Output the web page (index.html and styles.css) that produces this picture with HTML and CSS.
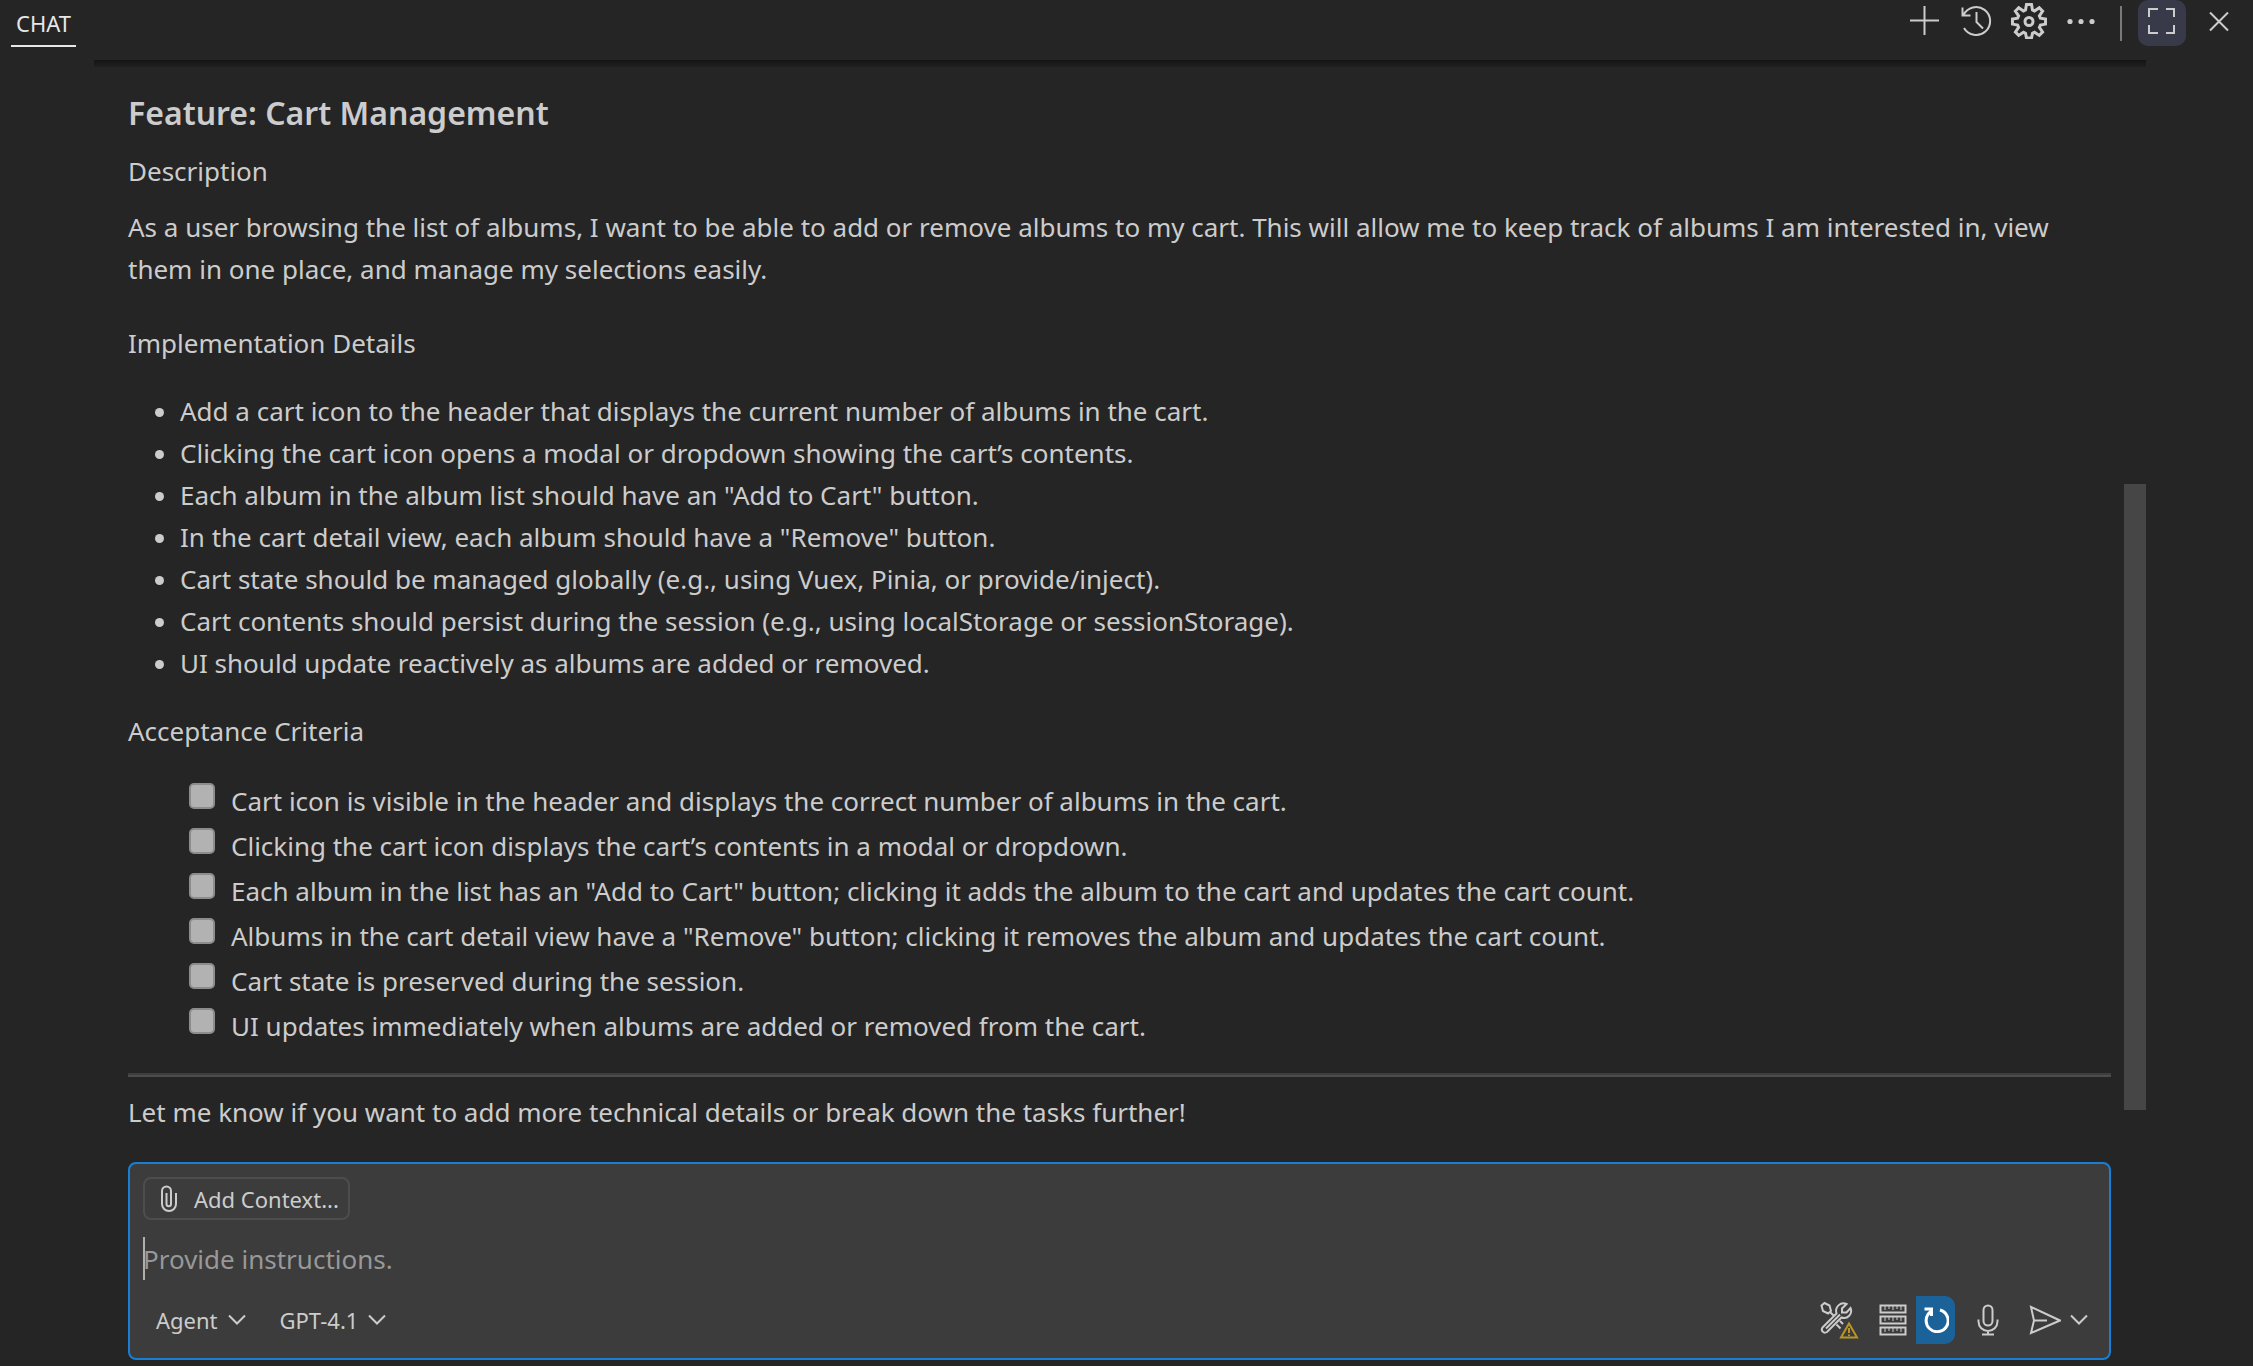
FILE: index.html
```html
<!DOCTYPE html>
<html lang="en">
<head>
<meta charset="utf-8">
<title>Chat</title>
<link rel="stylesheet" href="styles.css">
</head>
<body>
<header class="titlebar">
  <h1 class="tab">CHAT</h1>
  <div class="actions">
    <button class="icon-btn" aria-label="New chat"><svg width="36" height="36" viewBox="0 0 36 36"><path d="M17.500 3v29M3 17.500h29"/></svg></button>
    <button class="icon-btn" aria-label="History"><svg width="36" height="36" viewBox="0 0 36 36"><path d="M3.500 4.500v8h8M4.500 12A14 14 0 1 1 5 25M17.500 9v10l6.500 6.500"/></svg></button>
    <button class="icon-btn gear" aria-label="Settings"><svg width="36" height="36" viewBox="0 0 36 36"><path d="M15.500 1.500h5l1 5.500 2 1 4.800-3.200 3.300 3.300-3.200 4.800 1 2.200 5.100 1v5l-5.100 1-1 2.200 3.200 4.800-3.300 3.300-4.800-3.200-2 1-1 4.800h-5l-1-4.800-2-1-4.800 3.200-3.300-3.300 3.200-4.800-1-2.200-5.100-1v-5l5.100-1 1-2.200-3.200-4.800 3.300-3.300 4.800 3.200 2-1z"/><circle cx="18" cy="18.500" r="4"/></svg></button>
    <button class="icon-btn" aria-label="More actions"><svg width="36" height="36" viewBox="0 0 36 36"><g class="solid"><circle cx="7" cy="18.500" r="2.600"/><circle cx="18" cy="18.500" r="2.600"/><circle cx="29" cy="18.500" r="2.600"/></g></svg></button>
    <span class="divider"></span>
    <button class="icon-btn active" aria-label="Toggle full size"><svg width="36" height="36" viewBox="0 0 36 36"><path d="M5 14V6H14M22 6h8V14M30 22v8H22M14 30H5V22"/></svg></button>
    <button class="icon-btn close" aria-label="Close"><svg width="36" height="36" viewBox="0 0 36 36"><path d="M9 9.500l18 18M27 9.500l-18 18"/></svg></button>
  </div>
</header>
<main class="chat">
  <div class="scroll-shadow"></div>
  <div class="scrollbar"></div>
  <article class="message">
    <h2 class="feature">Feature: Cart Management</h2>
    <h3 class="section">Description</h3>
    <p class="text">As a user browsing the list of albums, I want to be able to add or remove albums to my cart. This will allow me to keep track of albums I am interested in, view them in one place, and manage my selections easily.</p>
    <h3 class="section details">Implementation Details</h3>
    <ul class="bullets">
      <li>Add a cart icon to the header that displays the current number of albums in the cart.</li>
      <li>Clicking the cart icon opens a modal or dropdown showing the cart’s contents.</li>
      <li>Each album in the album list should have an "Add to Cart" button.</li>
      <li>In the cart detail view, each album should have a "Remove" button.</li>
      <li>Cart state should be managed globally (e.g., using Vuex, Pinia, or provide/inject).</li>
      <li>Cart contents should persist during the session (e.g., using localStorage or sessionStorage).</li>
      <li>UI should update reactively as albums are added or removed.</li>
    </ul>
    <h3 class="section">Acceptance Criteria</h3>
    <ul class="checks">
      <li><label><input type="checkbox" disabled>Cart icon is visible in the header and displays the correct number of albums in the cart.</label></li>
      <li><label><input type="checkbox" disabled>Clicking the cart icon displays the cart’s contents in a modal or dropdown.</label></li>
      <li><label><input type="checkbox" disabled>Each album in the list has an "Add to Cart" button; clicking it adds the album to the cart and updates the cart count.</label></li>
      <li><label><input type="checkbox" disabled>Albums in the cart detail view have a "Remove" button; clicking it removes the album and updates the cart count.</label></li>
      <li><label><input type="checkbox" disabled>Cart state is preserved during the session.</label></li>
      <li><label><input type="checkbox" disabled>UI updates immediately when albums are added or removed from the cart.</label></li>
    </ul>
    <hr class="rule">
    <p class="text">Let me know if you want to add more technical details or break down the tasks further!</p>
  </article>
  <form class="composer">
    <button type="button" class="context"><svg width="18" height="28" viewBox="0 0 18 28"><path d="M16 8v11a7 7 0 0 1-14 0V6a4.500 4.500 0 0 1 9 0v13a2 2 0 0 1-4.500 0V8"/></svg>Add Context...</button>
    <div class="prompt-row">
      <span class="caret"></span>
      <input class="prompt" type="text" placeholder="Provide instructions." aria-label="Chat input">
    </div>
    <div class="toolbar">
      <button type="button" class="picker">Agent<svg width="18" height="12" viewBox="0 0 18 12"><path d="M1 1.500l8 8 8-8"/></svg></button>
      <button type="button" class="picker">GPT-4.1<svg width="18" height="12" viewBox="0 0 18 12"><path d="M1 1.500l8 8 8-8"/></svg></button>
      <div class="tools">
        <button type="button" class="tool" aria-label="Configure tools"><svg width="40" height="40" viewBox="0 0 40 40"><path d="M2.500 5.500l3-2.500 5 2.500 1.500 5.500-3 2.500-5-2.500zM11 12l4.500 4.500M3.500 27.500L17.500 13.500c-2-6.500 4-12 10-9.500l-4.500 4.500v4h4.500l4-4.500c2.500 6-3 11.500-9 9.500L8 32c-3.500 2-6.500-1.500-4.500-4.500zM7 28.500l14-14M21 21l3 3M17.500 24.500l4 4"/><path class="warn" d="M30 23.500l8 14H22zM30 28v5M30 34.500v1.500"/></svg></button>
        <button type="button" class="tool servers" aria-label="MCP servers"><svg width="28" height="32" viewBox="0 0 28 32"><path d="M1.500 1.500h25v7h-25zM1.500 12.500h25v7h-25zM1.500 23.500h25v7h-25z"/><path class="thin" d="M6 2v4M10 2v3M14 2v4M18 2v3M22 2v4M6 13v4M10 13v3M14 13v4M18 13v3M22 13v4M6 24v4M10 24v3M14 24v4M18 24v3M22 24v4"/></svg></button>
        <button type="button" class="tool refresh" aria-label="Refresh tools"><svg width="26" height="26" viewBox="0 0 26 26"><path d="M1.500 2h7v7M8 4.500A11 11 0 1 0 17 3"/></svg></button>
        <button type="button" class="tool mic" aria-label="Voice chat"><svg width="22" height="32" viewBox="0 0 22 32"><rect x="6.500" y="1.500" width="9" height="20" rx="4.500"/><path d="M1.500 15.500v2a9 9 0 0 0 19 0v-2M11 26v4.500M5 30.500h12"/></svg></button>
        <button type="button" class="tool" aria-label="Send"><svg width="32" height="32" viewBox="0 0 32 32"><path d="M2 3l29 13.500L2 29l3-12.500zM5 16.500h13"/></svg></button>
        <button type="button" class="tool more" aria-label="Send options"><svg width="18" height="12" viewBox="0 0 18 12"><path d="M1 1.500l8 8 8-8"/></svg></button>
      </div>
    </div>
  </form>
</main>
</body>
</html>
```
FILE: styles.css
```css
* { box-sizing: border-box; }

body {
  margin: 0;
  min-height: 100vh;
  background: #252525;
  color: #cccccc;
  font-family: "Noto Sans", "Open Sans", sans-serif;
  font-size: 26px;
  line-height: 42px;
}

h1, h2, h3, p, ul { margin: 0; padding: 0; font-size: 26px; font-weight: 400; }

button {
  display: flex;
  align-items: center;
  margin: 0;
  padding: 0;
  border: 0;
  background: none;
  color: inherit;
  font: inherit;
}

svg { fill: none; stroke: #cccccc; stroke-width: 2; flex: none; }
.solid { fill: #cccccc; stroke: none; }

/* Title bar */
.titlebar {
  display: flex;
  justify-content: space-between;
  height: 60px;
  padding: 0 10px 0 11px;
}
.tab {
  height: 47px;
  padding: 2px 5px 0;
  border-bottom: 2px solid #e7e7e7;
  color: #e7e7e7;
  font-size: 22px;
}
.actions { display: flex; align-items: center; height: 46px; gap: 4px; }
.icon-btn { justify-content: center; width: 48px; height: 46px; padding-bottom: 4px; }
.icon-btn.active { border-radius: 10px; background: #383a49; }
.gear svg { stroke-width: 3; }
.close { margin-left: 5px; }
.divider { width: 2px; height: 35px; margin: 0 12px 0 11px; background: #7a7a7a; }

/* Conversation */
.chat { position: relative; padding: 0 142px 0 128px; }
.scroll-shadow {
  position: absolute;
  top: 0;
  left: 94px;
  right: 107px;
  height: 7px;
  background: linear-gradient(#141414, #202020);
}
.scrollbar {
  position: absolute;
  top: 424px;
  right: 107px;
  width: 22px;
  height: 626px;
  background: #464646;
}
.message { padding-top: 30px; }
.feature { font-size: 32px; font-weight: 600; line-height: 46px; }
.section { margin-top: 14px; }
.text { margin-top: 14px; }
.details { margin-top: 32px; }
.bullets { margin: 26px 0; padding-left: 52px; }
.checks { margin: 27px 0 24px; padding-left: 61px; list-style: none; line-height: 45px; }
.checks label { display: flex; }
.checks input {
  appearance: none;
  width: 26px;
  height: 26px;
  margin: 4px 16px 0 0;
  border: 2px solid #8c8c8c;
  border-radius: 5px;
  background: #b2b2b2;
}
.rule { height: 4px; margin: 0; border: solid; border-width: 2px 0; border-color: #3e3e3e #4d4d4d #4d4d4d #3e3e3e; }

/* Composer */
.composer {
  height: 198px;
  margin-top: 29px;
  padding: 13px;
  border: 2px solid #1a7fd4;
  border-radius: 8px;
  background: #3c3c3c;
}
.context {
  height: 43px;
  gap: 16px;
  padding: 0 9px 0 15px;
  border: 2px solid #4d4d4d;
  border-radius: 8px;
  font-size: 22px;
}
.prompt-row { display: flex; align-items: center; height: 43px; margin-top: 17px; }
.caret { width: 2px; height: 43px; margin-right: -2px; background: #aeafad; }
.prompt {
  flex: 1;
  padding: 0;
  border: 0;
  outline: 0;
  background: none;
  color: inherit;
  font: inherit;
}
.prompt::placeholder { color: #989898; opacity: 1; }
.toolbar { display: flex; align-items: center; height: 48px; margin-top: 16px; padding-left: 13px; font-size: 22px; }
.picker { gap: 10px; margin-right: 34px; }
.tools { display: flex; align-items: center; margin-left: auto; padding-right: 8px; }
.servers { margin-left: 20px; }
.refresh { justify-content: center; width: 39px; height: 48px; margin-left: 9px; border-radius: 0 10px 10px 0; background: #1b6299; }
.tool svg { stroke-width: 2; }
.refresh svg { stroke: #ffffff; stroke-width: 3; }
.mic { margin: 0 30px 0 22px; }
.more { margin-left: 9px; }
.warn { stroke: #b89524; }
.thin { stroke-width: 1; }
```
